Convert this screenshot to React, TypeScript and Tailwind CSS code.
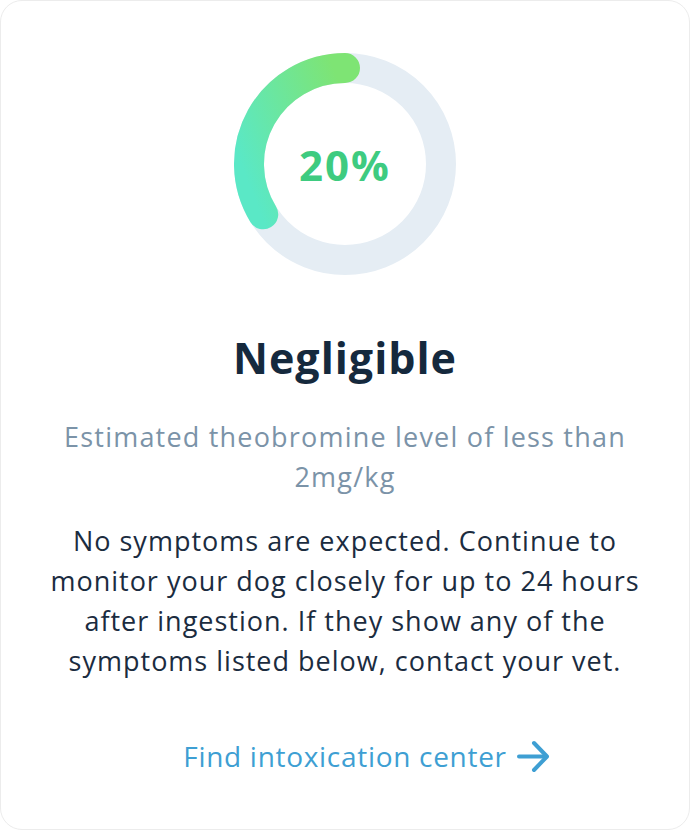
import React from 'react';

const font = { fontFamily: '"Open Sans", "Noto Sans", sans-serif' };

function RiskRing({ percent }: { percent: number }) {
  const r = 96;
  const c = 111;
  // arc runs counter-clockwise from 12 o'clock
  const angle = 121.6 * (Math.PI / 180);
  const endX = c - r * Math.sin(angle);
  const endY = c - r * Math.cos(angle);

  return (
    <div className="relative h-[222px] w-[222px] shrink-0">
      <svg width="222" height="222" viewBox="0 0 222 222" className="absolute inset-0">
        <defs>
          <linearGradient id="ring" x1="0" y1="0.8" x2="1" y2="0.2">
            <stop offset="0%" stopColor="#5ae8c6" />
            <stop offset="100%" stopColor="#7ee474" />
          </linearGradient>
        </defs>
        <circle cx={c} cy={c} r={r} fill="none" stroke="#e5edf4" strokeWidth="30" />
        <path
          d={`M ${c} ${c - r} A ${r} ${r} 0 0 0 ${endX} ${endY}`}
          fill="none"
          stroke="url(#ring)"
          strokeWidth="30"
          strokeLinecap="round"
        />
      </svg>
      <div className="absolute inset-0 flex items-center justify-center">
        <span className="text-[42px] font-bold tracking-[2px] text-[#3ecb80]" style={font}>
          {percent}%
        </span>
      </div>
    </div>
  );
}

export default function App() {
  return (
    <div className="h-[830px] w-[690px] bg-white">
      <div
        className="flex h-full flex-col items-center rounded-[22px] border border-[#ececec] bg-white px-[30px] pt-[52px] text-center"
        style={font}
      >
        <RiskRing percent={20} />

        <h1 className="mt-[59px] text-[43px] font-bold leading-[48px] tracking-[1px] text-[#15293d]">
          Negligible
        </h1>

        <p className="mt-[35px] text-[27px] leading-[40px] tracking-[1.2px] text-[#7b93a8]">
          Estimated theobromine level of less than
          <br />
          2mg/kg
        </p>

        <p className="mt-[24px] text-[27px] leading-[40px] tracking-[1px] text-[#1b2c3f]">
          No symptoms are expected. Continue to
          <br />
          monitor your dog closely for up to 24 hours
          <br />
          after ingestion. If they show any of the
          <br />
          symptoms listed below, contact your vet.
        </p>

        <a href="#" className="relative mt-[55px] text-[28px] leading-[40px] tracking-[0.7px] text-[#3e9fd3]">
          Find intoxication center
          <svg
            width="34"
            height="33"
            viewBox="0 0 34 33"
            className="absolute left-full top-[4px] ml-[9px]"
            fill="none"
            stroke="#3e9fd3"
            strokeWidth="4"
            strokeLinecap="round"
            strokeLinejoin="round"
          >
            <path d="M3 16.5 H30" />
            <path d="M18 3 L31 16.5 L18 30" />
          </svg>
        </a>
      </div>
    </div>
  );
}
